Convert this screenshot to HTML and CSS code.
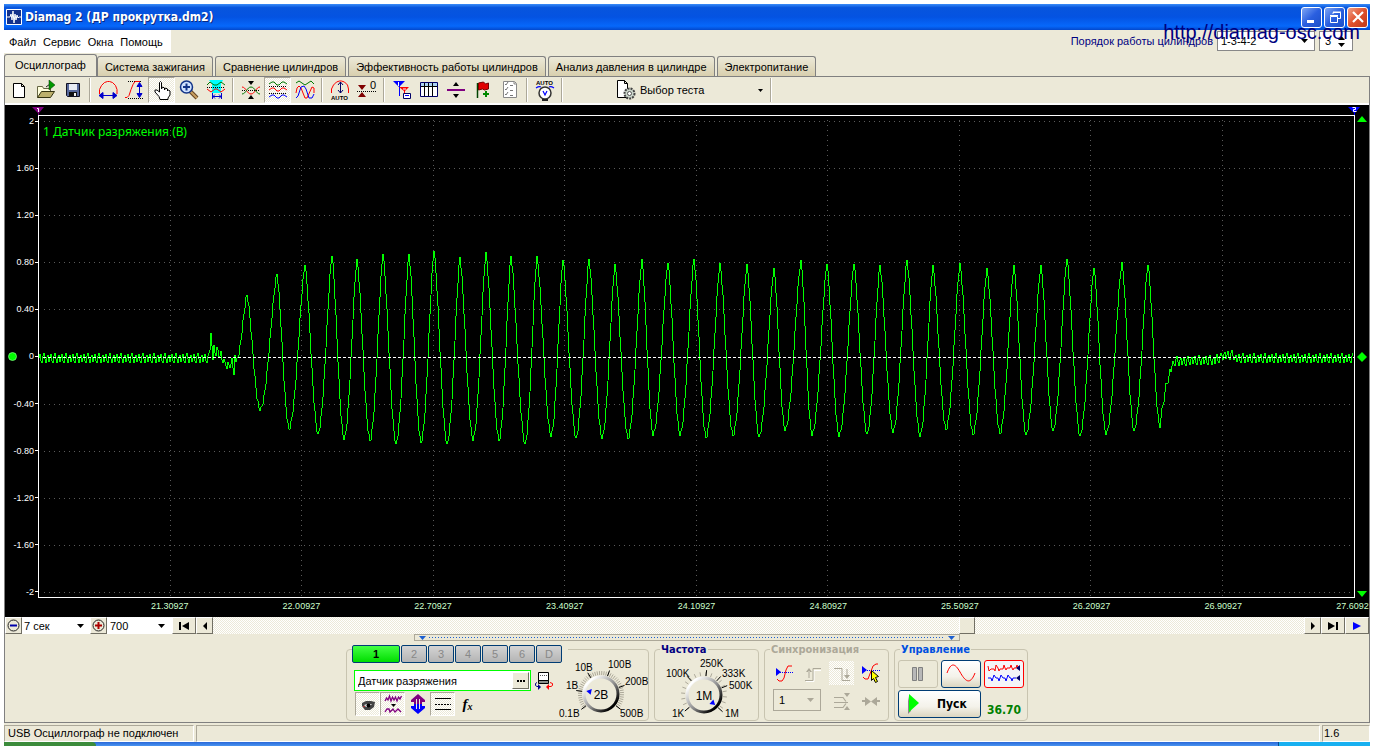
FILE: index.html
```html
<!DOCTYPE html>
<html lang="ru">
<head>
<meta charset="utf-8">
<title>Diamag 2 (ДР прокрутка.dm2)</title>
<link rel="stylesheet" href="styles.css">
</head>
<body>
<div class="window">
  <header class="titlebar">
    <svg class="app-icon" width="16" height="16" viewBox="0 0 16 16"><path fill="#14328c" stroke="#fff" d="M.5.5h15v15H.5z"/><path fill="none" stroke="#fff" d="M1 8h3l1-3 1 6 1-9 1 12 1-9 1 6 1-5 1 3 1-1h2"/></svg>
    <h1 class="title">Diamag 2 (ДР прокрутка.dm2)</h1>
    <div class="win-buttons">
      <button class="win-btn" aria-label="Свернуть"><svg width="18" height="18" viewBox="0 0 18 18"><path fill="#fff" d="M4 12h7v3H4z"/></svg></button>
      <button class="win-btn" aria-label="Восстановить"><svg width="18" height="18" viewBox="0 0 18 18"><path fill="none" stroke="#fff" d="M7 6V4.500h7.500v6H12M7 4h8M4.500 8.500h7v6h-7zM4 7.500h8"/></svg></button>
      <button class="win-btn close" aria-label="Закрыть"><svg width="18" height="18" viewBox="0 0 18 18"><path stroke="#fff" stroke-width="2.200" d="M4 4l10 10M14 4L4 14"/></svg></button>
    </div>
  </header>

  <div class="menu-row">
    <nav class="menu">
      <button>Файл</button><button>Сервис</button><button>Окна</button><button>Помощь</button>
    </nav>
    <div class="order">
      <label for="order">Порядок работы цилиндров</label>
      <select id="order" class="combo order-combo"><option>1-3-4-2</option></select>
      <div class="spinner">
        <input type="text" value="3" aria-label="Номер цилиндра">
        <div class="spin-arrows">
          <button aria-label="Больше"><svg width="7" height="4"><path d="M0 4h7L3.500 0z"/></svg></button>
          <button aria-label="Меньше"><svg width="7" height="4"><path d="M0 0h7L3.500 4z"/></svg></button>
        </div>
      </div>
    </div>
    <div class="watermark">http://diamag-osc.com</div>
  </div>

  <div class="tabs" role="tablist">
    <button class="tab active" role="tab">Осциллограф</button>
    <button class="tab" role="tab">Система зажигания</button>
    <button class="tab" role="tab">Сравнение цилиндров</button>
    <button class="tab" role="tab">Эффективность работы цилиндров</button>
    <button class="tab" role="tab">Анализ давления в цилиндре</button>
    <button class="tab" role="tab">Электропитание</button>
  </div>

  <main class="page">
    <div class="toolbar">
      <button class="tool" aria-label="Новый"><svg width="20" height="20" viewBox="0 0 20 20"><path fill="#fff" stroke="#000" d="M4.500 3.500h8l3 3v11h-11zM12.500 3.500v3h3"/></svg></button>
      <button class="tool" aria-label="Открыть"><svg width="20" height="20" viewBox="0 0 20 20"><path fill="#ffd" stroke="#664" d="M1.500 17.500v-11h5l1 2h7v3"/><path fill="#bcb06c" stroke="#331" d="M1.500 17.500l4-6h13l-4 6z"/><path fill="none" stroke="#222" d="M10 7l4-3"/><path fill="#090" stroke="#030" stroke-width=".5" d="M13 0l6 5-6 5z"/></svg></button>
      <button class="tool" aria-label="Сохранить"><svg width="20" height="20" viewBox="0 0 20 20"><path fill="#57689a" stroke="#112" d="M3.500 3.500h13v13h-12l-1-1z"/><path fill="#e8ecf4" d="M6 4h8v6H6z"/><path fill="#111" d="M6 12h8v4H6z"/><path fill="#eee" d="M11 13h2v3h-2z"/></svg></button>
      <span class="sep"></span>
      <button class="tool" aria-label="Ширина"><svg width="20" height="20" viewBox="0 0 20 20"><path fill="none" stroke="red" d="M1.500 14V9.500l2-4 3-3 3-1h2l3 1 3 3 1.500 4V14"/><path fill="#00c" stroke="#00c" d="M2 15.500h16M5 12.500v6l-4-3zM15 12.500v6l4-3z"/></svg></button>
      <button class="tool" aria-label="Высота"><svg width="20" height="20" viewBox="0 0 20 20"><path stroke="#000" stroke-dasharray="1 1" d="M3 1.500h13M3 18.500h15"/><path fill="none" stroke="red" d="M0 17.500h2l2-2 2-6 2-5 2-3h5"/><path fill="#00c" stroke="#00c" d="M14.500 3v14M12 6.500h5l-2.500-4zM12 13.500h5l-2.500 4z"/></svg></button>
      <button class="tool pressed" aria-label="Перемещение"><svg width="20" height="20" viewBox="0 0 20 20"><path fill="#fff" stroke="#000" d="M7.500 12V2.500l1-1 1 1V9l1-2 2 1v2l1-2 2 1v2l1-1 1.500 1v4l-2 3v1.500H8l-1-3-4-4.500v-2h2z"/></svg></button>
      <button class="tool" aria-label="Лупа"><svg width="20" height="20" viewBox="0 0 20 20"><path stroke="#642" stroke-width="4" d="M11 11l7 7"/><path stroke="#c9a060" stroke-width="2" d="M11 11l7 7"/><circle cx="7.500" cy="7" r="6" fill="#cfe2ff" stroke="#138" stroke-width="1.500"/><path fill="#138" d="M4 6h7v2H4zM6.500 3.500h2v7h-2z"/></svg></button>
      <button class="tool" aria-label="Масштаб участка"><svg width="20" height="20" viewBox="0 0 20 20"><path fill="#0ff" d="M3 0h14l-2 4v9H6V4z"/><path fill="none" stroke="#070" d="M1 5l3-3 4 3h3l4-3 4 3"/><path stroke="#000" stroke-dasharray="1 1" d="M1 7.500h18"/><path fill="none" stroke="red" d="M1 9l4 3 4-3h2l4 3 4-3"/><path fill="none" stroke="#00c" d="M6.500 13v6M15.500 13v6M7 16.500h8M9 14.500l-2 2 2 2M13 14.500l2 2-2 2"/></svg></button>
      <span class="sep"></span>
      <button class="tool" aria-label="Совместить"><svg width="20" height="20" viewBox="0 0 20 20"><path d="M7 1h6l-3 4zM7 19h6l-3-4z"/><path stroke="#000" stroke-dasharray="1 1" d="M1 10.500h18"/><path fill="none" stroke="red" d="M1 7c4 0 5 7 9 7s5-7 9-7"/><path fill="none" stroke="#070" d="M1 14c4 0 5-7 9-7s5 7 9 7"/></svg></button>
      <button class="tool pressed" aria-label="Разнести"><svg width="20" height="20" viewBox="0 0 20 20"><path fill="none" stroke="#070" d="M1 4l3-2h2l3 3h2l3-3h2l3 2"/><path stroke="#000" stroke-dasharray="1 1" d="M1 6.500h18M1 13.500h18"/><path fill="none" stroke="red" d="M1 10l3-2h2l3 3h2l3-3h2l3 2"/><path fill="none" stroke="#00f" d="M1 17l3-2h2l3 3h2l3-3h2l3 2"/></svg></button>
      <button class="tool" aria-label="Наложить"><svg width="20" height="20" viewBox="0 0 20 20"><path fill="none" stroke="#070" d="M1 3l3-2 6 4 6-4 3 3"/><path fill="none" stroke="red" d="M1 13l1-5 2-2 2 2 4 10h2l5-11 2 1v5"/><path fill="none" stroke="#00f" d="M1 18l2-2 3-9 3-1 2 3 3 9h3l2-4"/></svg></button>
      <span class="sep"></span>
      <button class="tool" aria-label="Автомасштаб"><svg width="20" height="20" viewBox="0 0 20 20"><path fill="none" stroke="red" d="M1.500 13V9l2-4 3-3 3-1h2l3 1 3 3 1 4v4"/><path fill="none" stroke="#006" d="M10.500 2v11M8 5l2.500-3L13 5M8 10l2.500 3 2.500-3"/><text class="ico-text" x="1" y="20">AUTO</text></svg></button>
      <button class="tool" aria-label="Обнулить"><svg width="20" height="20" viewBox="0 0 20 20"><path fill="#800000" d="M1 5h8L5 10zM1 17h8l-4-5z"/><path stroke="#000" stroke-dasharray="1 1" d="M0 11.500h20"/><text class="ico-zero" x="13" y="9">0</text></svg></button>
      <span class="sep"></span>
      <button class="tool" aria-label="Маркеры"><svg width="20" height="20" viewBox="0 0 20 20"><path fill="#00f" d="M1 1h12L8 6v10H7V7z"/><path fill="red" d="M7 7h10l-4 4v5h-1v-5z"/><path stroke="#fff" d="M6.500 2v4M11 9h3"/><path fill="#fff" stroke="#006" d="M11.500 13.500h7v5h-7z"/><path stroke="#00f" d="M13 15.500h4"/></svg></button>
      <button class="tool" aria-label="Таблица"><svg width="20" height="20" viewBox="0 0 20 20"><path fill="#fff" stroke="#006" d="M1.500 2.500h17v14h-17z"/><path fill="#acd4f4" d="M2 3h16v3H2z"/><path fill="none" stroke="#000" d="M2 6.500h16M5.500 3v13M9.500 3v13M13.500 3v13"/></svg></button>
      <button class="tool" aria-label="Линия"><svg width="20" height="20" viewBox="0 0 20 20"><path d="M7 6h6l-3-4zM7 14h6l-3 4z"/><path fill="#800080" d="M1 9h18v2H1z"/></svg></button>
      <button class="tool" aria-label="Добавить флаг"><svg width="20" height="20" viewBox="0 0 20 20"><path stroke="#040" stroke-width="1.500" d="M4.500 3v15"/><path fill="#e00000" stroke="#700" d="M5.500 3l5-1 2 2 3-1v6l-4 1-2-1-4 1z"/><path fill="#080" d="M12 11h2v2h2v2h-2v2h-2v-2h-2v-2h2z"/></svg></button>
      <button class="tool" aria-label="Список"><svg width="20" height="20" viewBox="0 0 20 20"><path fill="#fff" stroke="#888" d="M3.500 1.500h11l2 2v14h-13zM14 2v2h2"/><path fill="none" stroke="#777" d="M5 4l1 1 2-3M5 9l1 1 2-3M5 14l1 1 2-3M10 5.500h3M10 10.500h3M10 15.500h3"/></svg></button>
      <span class="sep"></span>
      <button class="tool" aria-label="Автоизмерение"><svg width="20" height="22" viewBox="0 0 20 22"><text class="ico-text" x="1" y="6">AUTO</text><circle cx="10" cy="14" r="6" fill="#fff" stroke="#333" stroke-width="1.500"/><path fill="none" stroke="#00f" stroke-width="1.200" d="M8 12l2 4 2-4M1 9q3-2 5-1M19 9q-3-2-5-1"/><path fill="#222" d="M7 20h6v2H7z"/></svg></button>
      <span class="sep"></span>
      <button class="test-menu">
        <svg width="20" height="20" viewBox="0 0 20 20"><path fill="#fff" stroke="#000" d="M1.500.500h7l3 3v14h-10zM8.500.500v3h3"/><circle cx="13.500" cy="13.500" r="5" fill="#cdd8cd" stroke="#444" stroke-width="2" stroke-dasharray="2 1"/><circle cx="13.500" cy="13.500" r="2" fill="#fff" stroke="#555"/></svg>
        <span>Выбор теста</span>
        <svg class="caret" width="5" height="3"><path d="M0 0h5L2.500 3z"/></svg>
      </button>
      <span class="sep"></span>
    </div>

    <section class="chart">
      <div class="marker-row">
        <svg width="12" height="9" viewBox="0 0 12 9"><path fill="#800080" d="M0 0h12L7 6v3H6V6z"/><path fill="none" stroke="#fff" d="M5 1.500h1.500V5"/></svg>
        <svg width="12" height="9" viewBox="0 0 12 9"><path fill="#00f" d="M0 0h12L7 6v3H6V6z"/><path fill="none" stroke="#fff" d="M4.500.500h3v2h-2v2h3"/></svg>
      </div>
      <div class="y-axis">
        <span>2</span><span>1.60</span><span>1.20</span><span>0.80</span><span>0.40</span><span>0</span><span>-0.40</span><span>-0.80</span><span>-1.20</span><span>-1.60</span><span>-2</span>
        <svg class="zero-dot" width="9" height="9"><circle cx="4.500" cy="4.500" r="4" fill="#0f0" stroke="#8f8" stroke-width=".7"/></svg>
      </div>
      <div class="plot">
        <svg id="plot" class="plot-area" viewBox="39 116 1315 481" preserveAspectRatio="none"></svg>
        <div class="plot-title">1 Датчик разряжения (В)</div>
      </div>
      <div class="handles">
        <svg width="10" height="8"><path fill="#0f0" d="M0 7h10L5 1z"/></svg>
        <svg width="10" height="10"><path fill="#0f0" d="M5 0l5 5-5 5-5-5z"/></svg>
        <svg width="10" height="8"><path fill="#0f0" d="M0 1h10L5 7z"/></svg>
      </div>
      <div class="x-axis">
        <span>21.30927</span><span>22.00927</span><span>22.70927</span><span>23.40927</span><span>24.10927</span><span>24.80927</span><span>25.50927</span><span>26.20927</span><span>26.90927</span><span>27.60927</span>
      </div>
    </section>

    <div class="scroll-row">
      <button class="sbtn w17" aria-label="Сжать"><svg width="13" height="13"><circle cx="6.500" cy="6.500" r="5.500" fill="none" stroke="#222"/><path fill="#00a" d="M3 5.500h7v2H3z"/></svg></button>
      <select class="combo time-combo" aria-label="Время"><option>7 сек</option></select>
      <button class="sbtn w17" aria-label="Растянуть"><svg width="13" height="13"><circle cx="6.500" cy="6.500" r="5.500" fill="none" stroke="#222"/><path fill="#a00" d="M3 5.500h7v2H3zM5.500 3h2v7h-2z"/></svg></button>
      <select class="combo scale-combo" aria-label="Масштаб"><option>700</option></select>
      <button class="sbtn w24" aria-label="В начало"><svg width="10" height="8"><path d="M0 0h2v8H0zM10 0v8L3 4z"/></svg></button>
      <button class="sbtn w17" aria-label="Назад"><svg width="4" height="8"><path d="M4 0v8L0 4z"/></svg></button>
      <input class="scrollbar" type="range" min="0" max="1000" value="694" aria-label="Прокрутка">
      <button class="sbtn w17" aria-label="Вперёд"><svg width="4" height="8"><path d="M0 0v8l4-4z"/></svg></button>
      <button class="sbtn w24" aria-label="В конец"><svg width="10" height="8"><path d="M8 0h2v8H8zM0 0v8l7-4z"/></svg></button>
      <button class="sbtn w24" aria-label="Воспроизвести"><svg width="8" height="8"><path fill="#00f" d="M0 0v8l8-4z"/></svg></button>
    </div>

    <section class="bottom">
      <div class="splitter">
        <svg width="7" height="4"><path fill="#1c5fd0" d="M0 0h7L3.500 4z"/></svg><span class="dots"></span><svg width="7" height="4"><path fill="#1c5fd0" d="M0 0h7L3.500 4z"/></svg>
      </div>
      <div class="groups">
        <div class="group channels">
          <div class="ch-left">
            <div class="ch-tabs"><button class="ch on">1</button><button class="ch">2</button><button class="ch">3</button><button class="ch">4</button><button class="ch">5</button><button class="ch">6</button><button class="ch">D</button></div>
            <div class="ch-name">
              <div class="name-box"><input type="text" value="Датчик разряжения" aria-label="Имя канала"><button class="more" aria-label="Выбрать"><svg width="8" height="2"><path d="M0 0h2v2H0zM3 0h2v2H3zM6 0h2v2H6z"/></svg></button></div>
              <button class="plain" aria-label="Подключить датчик"><svg width="20" height="20" viewBox="0 0 20 20"><path fill="#fff" stroke="#000" d="M4.500 1.500h10v8h-10z"/><path fill="#8a8f8a" stroke="#000" d="M4.500 9.500h10v3h-10z"/><path stroke="#555" stroke-dasharray="1 1" d="M6 4.500h7"/><path fill="none" stroke="#008" d="M3 11.500l-1.500 1v2l1.500 1h2"/><path fill="#008" d="M4 13v6l3-3z"/><path fill="none" stroke="red" d="M16 11.500l2.500 1v2l-1.500 1h-2"/><path fill="red" d="M15 13v6l-3-3z"/></svg></button>
            </div>
            <div class="ch-tools">
              <button class="mini pressed" aria-label="Видимость"><svg width="20" height="20" viewBox="0 0 20 20"><path fill="#444" d="M4 9l4-2h5l4 1-1 5-4 3H7l-3-4z"/><path fill="#ddd" d="M6 11l3-1h5l-3 3H8z"/><circle cx="10.500" cy="11.500" r="2"/><path fill="#a33" d="M5 12h2v1H5z"/></svg></button>
              <button class="mini pressed" aria-label="Фильтр"><svg width="20" height="20" viewBox="0 0 20 20"><path fill="none" stroke="#800080" stroke-width="1.300" d="M2 7l1.500-3L5 6l1.500-4L8 7l1.500-4L11 6l1.500-3L14 7l1.500-4L17 5l1.500-3M2 18l2-3h2l1 3 1-1 2-2 2 3 3-3 3 3"/><path d="M8 10h5l-2.500 3z"/></svg></button>
              <button class="mini" aria-label="Инверсия"><svg width="20" height="20" viewBox="0 0 20 20"><path fill="#800080" d="M10 0l7 6v2h-3v2h-2V5h-1v5H9V5H8v5H6V8H3V6z"/><path fill="#00f" d="M10 20l7-6v-2h-3v-2h-2v5h-1v-5H9v5H8v-5H6v2H3v2z"/></svg></button>
              <button class="mini pressed" aria-label="Уровни"><svg width="20" height="20" viewBox="0 0 20 20"><path stroke="#000" d="M2 4.500h16M2 15.500h16"/><path stroke="#000" stroke-dasharray="2 1" d="M2 10.500h16"/></svg></button>
              <button class="mini fx" aria-label="Функция">f<small>x</small></button>
            </div>
          </div>
          <svg class="dial" id="volt-dial" width="94" height="66" viewBox="0 0 94 66" data-label="2В"></svg>
        </div>

        <div class="group freq">
          <h2 class="legend navy">Частота</h2>
          <svg class="dial" id="freq-dial" width="94" height="66" viewBox="0 0 94 66" data-label="1М"></svg>
        </div>

        <div class="group sync">
          <h2 class="legend dim">Синхронизация</h2>
          <div class="sync-grid">
            <button class="mini" aria-label="По уровню"><svg width="20" height="20" viewBox="0 0 20 20"><path fill="#00f" d="M2 5v8l5-4z"/><path stroke="#00f" stroke-dasharray="1 1" d="M6 9.500h13"/><path fill="none" stroke="red" d="M3 16l2 2h3l2-3 2-8 2-4h4"/></svg></button>
            <button class="mini" aria-label="По фронту"><svg width="20" height="20" viewBox="0 0 20 20"><path fill="none" stroke="#fff" d="M3 18.500h8v-11h7"/><path fill="none" stroke="#aca899" d="M2 17.500h8V5.500h8"/><path fill="#aca899" d="M3 9h6L6 5zM5.500 8h1v7h-1z"/></svg></button>
            <button class="mini shaded" aria-label="По спаду"><svg width="20" height="20" viewBox="0 0 20 20"><path fill="none" stroke="#aca899" d="M2 5.500h8v12h8"/><path fill="#aca899" d="M12 12h6l-3 4zM14.500 6h1v8h-1z"/></svg></button>
            <button class="mini" aria-label="Вручную"><svg width="20" height="20" viewBox="0 0 20 20"><path fill="#00f" d="M1 3v8l5-4z"/><path stroke="#00f" stroke-dasharray="1 1" d="M6 7.500h13"/><path fill="none" stroke="red" d="M2 14l2 2h3l5-13 3-2h2"/><path fill="#ff0" stroke="#000" d="M10.500 7.500l7 6-3 1 2 4-2 1-2-4-2 2z"/></svg></button>
            <select class="combo sync-combo" aria-label="Канал синхронизации" disabled><option>1</option></select>
            <button class="mini" aria-label="Уровень" disabled><svg width="20" height="20" viewBox="0 0 20 20"><path fill="none" stroke="#aca899" d="M2 6.500h9l3 4M2 16.500h9l3-4M2 11.500h14" stroke-width="1.200"/><path fill="#aca899" d="M12 2h6l-3 4zM12 19h6l-3-4z"/></svg></button>
            <button class="mini" aria-label="Центр" disabled><svg width="20" height="20" viewBox="0 0 20 20"><path fill="#aca899" d="M1 9h3V6l6 4.500L4 15v-4H1zM19 9h-3V6l-6 4.500 6 4.500v-4h3z"/></svg></button>
          </div>
        </div>

        <div class="group control">
          <h2 class="legend blue">Управление</h2>
          <div class="ctl-grid">
            <button class="xp off" aria-label="Пауза" disabled><svg width="14" height="16"><path fill="#b8b8b8" stroke="#808080" d="M1.500 1.500h4v13h-4zM7.500 1.500h4v13h-4z"/></svg></button>
            <button class="xp" aria-label="Синусоида"><svg width="30" height="22" viewBox="0 0 30 22"><path fill="none" stroke="red" d="M1 10C5-1 9 0 14 9s10 14 15 1"/></svg></button>
            <button class="xp red" aria-label="Самописец"><svg width="34" height="22" viewBox="0 0 34 22"><path fill="none" stroke="red" d="M1 3l1 5 2-2h3l1 2 1-6 2 3 1 3 1-2h3l1-4 1 3 1 2 1-2h3l1-3 1 3 1 2 1-2h2l1-3 1 2"/><path fill="none" stroke="#00f" d="M1 15h3l1 3 1-3 1-3 2 3h2l1 3 1-3 1-3 2 3h2l1 3 1-3 1-3 2 3h1l1 3 1-3h3"/><path fill="#006" d="M33 2v6l-4-3zM33 12v6l-4-3z"/></svg></button>
            <button class="xp start"><svg width="11" height="20"><path fill="#888" d="M0 2v18l3-3z"/><path fill="#0f0" d="M1 0v18l10-9z"/></svg><span>Пуск</span></button>
            <output class="rate">36.70</output>
          </div>
        </div>
      </div>
    </section>
  </main>

  <footer class="status">
    <div class="cell first">USB Осциллограф не подключен</div>
    <div class="cell grow"></div>
    <div class="cell last">1.6</div>
  </footer>
  <div class="taskbar"><span class="start-edge"></span><span class="tray-edge"></span></div>
</div>
<script src="chart.js"></script>
</body>
</html>
```
FILE: styles.css
```css
* { box-sizing: border-box; }
html, body { height: 100%; margin: 0; }
body { background: #fff; font-family: "Liberation Sans", Arial, sans-serif; font-size: 11px; color: #000; }
button, input, select { font: inherit; color: inherit; margin: 0; padding: 0; border: 0; background: none; border-radius: 0; }
svg { display: block; flex: none; }
h1, h2 { margin: 0; }

.window { display: flex; flex-direction: column; height: 100vh; padding: 4px 4px 0; overflow: hidden; }

.titlebar { display: flex; align-items: center; height: 26px; padding: 0 2px; background: linear-gradient(#3a8cf8 0, #0855dd 14%, #0453e2 50%, #0668fb 85%, #0348cc 100%); }
.app-icon { margin-right: 3px; }
.title { flex: 1; font: bold 12px/18px "DejaVu Sans Condensed", "DejaVu Sans", sans-serif; color: #fff; text-shadow: 1px 1px #0a2a80; }
.win-buttons { display: flex; gap: 2px; }
.win-btn { display: grid; place-items: center; width: 21px; height: 21px; border: 1px solid #fff; border-radius: 3px; background: linear-gradient(135deg, #7fa6f4, #2a5fe0 50%, #1c4fc8); }
.win-btn.close { background: linear-gradient(135deg, #f0a088, #e0502c 50%, #c0391a); }

.menu-row { position: relative; display: flex; justify-content: space-between; align-items: flex-start; height: 24px; background: #ece9d8; }
.menu { display: flex; gap: 7px; height: 23px; padding: 0 8px 0 5px; background: #fff; }
.order { display: flex; align-items: center; gap: 4px; padding-right: 17px; height: 22px; color: #000080; }
.combo { appearance: none; color: #000; background: #fff url("data:image/svg+xml,%3Csvg xmlns='http://www.w3.org/2000/svg' width='7' height='4'%3E%3Cpath d='M0 0h7L3.500 4z'/%3E%3C/svg%3E") no-repeat right 6px center; }
.order-combo { width: 98px; height: 20px; padding-left: 3px; border: 1px solid #888; }
.spinner { display: flex; align-items: center; width: 34px; height: 20px; border: 1px solid #888; background: #fff; color: #000; }
.spinner input { width: 18px; padding-left: 5px; }
.spin-arrows { display: flex; flex-direction: column; gap: 3px; }
.spin-arrows button { height: 4px; }
.watermark { position: absolute; right: 10px; top: -10px; font: 20px/24px "Liberation Sans", sans-serif; color: #000080; }

.tabs { display: flex; align-items: flex-end; gap: 2px; height: 22px; background: #ece9d8; }
.tab { height: 20px; padding: 0 7px; border: 1px solid #808080; border-bottom: 0; border-radius: 3px 3px 0 0; background: linear-gradient(#ece9d8, #d8cfae); white-space: nowrap; }
.tab.active { height: 22px; margin-right: -2px; padding: 0 10px 2px; background: #ece9d8; }

.page { flex: 1; display: flex; flex-direction: column; min-height: 0; background: #ece9d8; border: 1px solid #808080; }
.toolbar { display: flex; align-items: center; height: 28px; border-bottom: 2px solid #fff; }
.tool { display: grid; place-items: center; width: 27px; height: 26px; }
.pressed, .shaded { background: repeating-conic-gradient(#fff 0 25%, #ece9d8 0 50%) 0 0 / 2px 2px; }
.pressed { border: 1px solid; border-color: #aca899 #fff #fff #aca899; }
.sep { width: 2px; height: 24px; margin: 0 3px; border-left: 1px solid #aca899; border-right: 1px solid #fff; }
.ico-text { font: bold 6px "Liberation Sans", sans-serif; }
.ico-zero { font: 11px "Liberation Sans", sans-serif; }
.test-menu { display: flex; align-items: center; gap: 4px; width: 201px; padding: 0 4px 0 50px; }
.caret { margin-left: auto; }

.chart { flex: 1; min-height: 0; display: grid; grid-template-columns: 33px minmax(0, 1fr) 14px; grid-template-rows: 10px minmax(0, 1fr) 19px; background: #000; overflow: hidden; }
.marker-row { grid-column: 2; display: flex; justify-content: space-between; margin: 0 -5px 0 -6px; padding-top: 2px; }
.y-axis { grid-column: 1; position: relative; display: flex; flex-direction: column; justify-content: space-between; font: 9px/12px "Liberation Sans", sans-serif; color: #fff; text-align: right; }
.y-axis span { display: flex; align-items: center; justify-content: flex-end; gap: 1px; }
.y-axis span::after { content: ""; width: 3px; height: 1px; background: #fff; }
.zero-dot { position: absolute; left: 3px; top: calc(50% - 5px); }
.plot { position: relative; border: 1px solid #fff; }
.plot-area { width: 100%; height: 100%; }
.plot-area * { vector-effect: non-scaling-stroke; shape-rendering: crispEdges; }
.grid-line { stroke: #5a5a5a; stroke-dasharray: 1 4; }
.zero-line { stroke: #fff; stroke-dasharray: 3 2; }
.wave { fill: none; stroke: #0f0; }
.plot-title { position: absolute; left: 4px; top: 8px; font: 12px/16px "Noto Sans", sans-serif; color: #0f0; }
.handles { display: flex; flex-direction: column; justify-content: space-between; align-items: center; }
.x-axis { grid-column: 2; display: grid; grid-template-columns: repeat(10, minmax(0, 1fr)); margin: 0 -5% 0 5%; font: 9px/17px "Liberation Sans", sans-serif; color: #cfc; text-align: center; }

.scroll-row { display: flex; height: 17px; background: #fff; }
.sbtn { display: grid; place-items: center; flex: none; background: #ece9d8; border: 1px solid; border-color: #fff #716f64 #716f64 #fff; }
.w17 { width: 17px; }
.w24 { width: 24px; }
.time-combo { width: 68px; padding-left: 2px; }
.scale-combo { width: 65px; padding-left: 3px; background-position: right 7px center; }
.scrollbar { appearance: none; flex: 1; min-width: 0; background: repeating-conic-gradient(#fff 0 25%, #ece9d8 0 50%) 0 0 / 2px 2px; }
.scrollbar::-webkit-slider-thumb { appearance: none; width: 16px; height: 17px; background: #ece9d8; border: 1px solid; border-color: #fff #716f64 #716f64 #fff; }

.bottom { display: flex; flex-direction: column; align-items: center; height: 88px; }
.splitter { display: flex; align-items: center; gap: 3px; width: 40%; height: 7px; padding: 0 4px; border: 1px solid #aca899; }
.dots { flex: 1; height: 1px; background: repeating-linear-gradient(90deg, #1c5fd0 0 1px, transparent 1px 3px); }
.groups { display: flex; gap: 5px; padding-top: 8px; }
.group { height: 72px; border: 1px solid #c8c4b0; border-radius: 4px; }
.legend { width: max-content; margin: -8px 0 0 5px; padding: 0 1px; background: #ece9d8; font: bold 11px/16px "DejaVu Sans Condensed", "DejaVu Sans", sans-serif; }
.navy { color: #000080; }
.dim { color: #aca899; }
.blue { color: #0050e0; }

.channels { display: flex; width: 303px; padding-left: 5px; }
.ch-left { width: 210px; margin-top: -5px; }
.ch-tabs { display: flex; gap: 1px; width: max-content; background: #ece9d8; padding-right: 6px; }
.ch { width: 26px; height: 18px; border: 1px solid #003c74; border-radius: 2px; background: linear-gradient(#d4d4d4, #b4b4b4); color: #888; }
.ch.on { width: 48px; background: linear-gradient(#4f4, #0d0); color: #000; font-weight: bold; }
.ch-name { display: flex; align-items: center; gap: 3px; padding: 7px 0 0 2px; }
.name-box { display: flex; width: 177px; height: 21px; padding: 1px; border: 1px solid #0f0; background: #fff; }
.name-box input { flex: 1; min-width: 0; padding-left: 2px; }
.more { display: grid; place-items: center; width: 17px; background: #ece9d8; border: 1px solid; border-color: #fff #716f64 #716f64 #fff; }
.ch-tools { display: flex; gap: 0; padding: 1px 0 0 3px; }
.mini { display: grid; place-items: center; width: 25px; height: 24px; }
.fx { display: flex; align-items: center; justify-content: center; font: italic bold 15px/24px "Liberation Serif", serif; }
.fx small { font-size: 10px; padding-top: 5px; }
.dial { margin-top: 2px; overflow: visible; }
.dial text { font: 10px "Liberation Sans", sans-serif; }
.dial .value { font-size: 12px; text-anchor: middle; }

.freq { width: 105px; }
.freq .dial { margin: -1px 0 0 5px; }
.sync { width: 125px; }
.sync-grid { display: grid; grid-template-columns: repeat(4, 28px); gap: 4px 1px; padding: 3px 0 0 6px; }
.sync-combo { grid-column: 1 / 3; width: 48px; height: 22px; margin-left: 2px; padding-left: 5px; opacity: 1; border: 1px solid #aca899; background-color: #ece9d8; background-image: url("data:image/svg+xml,%3Csvg xmlns='http://www.w3.org/2000/svg' width='7' height='4'%3E%3Cpath fill='%23aca899' d='M0 0h7L3.500 4z'/%3E%3C/svg%3E"); }
.control { width: 134px; }
.ctl-grid { display: grid; grid-template-columns: repeat(3, 40px); grid-template-rows: 28px 28px; gap: 2px 3px; padding: 2px 0 0 3px; }
.xp { display: grid; place-items: center; border: 1px solid #003c74; border-radius: 3px; background: linear-gradient(#fff, #f4f2ea 60%, #dcd6c0); }
.xp.off { background: #ece9d8; border-color: #c8c4b0; }
.xp.red { border-color: red; background: #f4f4f8; }
.xp.start { grid-column: 1 / 3; display: flex; align-items: center; gap: 18px; padding-left: 9px; font: bold 12px/16px "DejaVu Sans Condensed", "DejaVu Sans", sans-serif; }
.rate { align-self: end; text-align: center; font: bold 12px/16px "DejaVu Sans Condensed", "DejaVu Sans", sans-serif; color: #008000; }

.status { display: flex; gap: 2px; height: 19px; padding-top: 2px; background: #ece9d8; }
.cell { height: 17px; padding: 0 3px; line-height: 15px; border: 1px solid; border-color: #aca899 #fff #fff #aca899; white-space: nowrap; }
.first { width: 190px; }
.grow { flex: 1; }
.last { width: 48px; padding: 0 1px; }
.taskbar { display: flex; justify-content: space-between; height: 4px; background: linear-gradient(#2a68d8, #4a94f0); }
.start-edge { width: 92px; background: #3c8c3c; border-radius: 0 4px 0 0; }
.tray-edge { width: 92px; background: #18b0f0; border-left: 1px solid #0a4a90; }
```
FILE: chart.js
```js
const NS = "http://www.w3.org/2000/svg";

function add(parent, name, attrs, text) {
  const el = document.createElementNS(NS, name);
  for (const key in attrs) el.setAttribute(key, attrs[key]);
  if (text) el.textContent = text;
  parent.appendChild(el);
  return el;
}

/* Extremes of the cranking pulses: x, y of each peak and trough in turn */
const pulses = [
  [236,362],[247,295],[260,411],[277,274],[289,429],[305,265],[318,434],[332,256],[344,440],[357,259],[370,441],
  [383,254],[396,444],[409,254],[421,443],[434,251],[447,444],[460,257],[473,441],[486,252],[499,441],
  [511,256],[525,444],[537,256],[551,437],[563,260],[576,438],[589,259],[602,439],[615,264],[628,439],
  [642,259],[653,436],[668,263],[680,436],[694,259],[706,438],[720,263],[733,436],[747,264],[759,437],
  [774,268],[785,431],[801,260],[812,436],[827,264],[839,437],[854,264],[867,434],[880,265],[893,433],
  [907,260],[920,437],[933,265],[946,430],[960,263],[973,435],[987,268],[1000,434],[1014,265],[1026,435],
  [1041,265],[1053,431],[1067,259],[1080,436],[1094,268],[1106,435],[1122,262],[1134,431],[1148,265],[1160,428]
];
const ripple = [-5, 1, 5, -1, -3, 4, 0, -4, 3, 5, -2];

function wavePoints() {
  const pts = [];
  const noise = (x, mid) => pts.push([x, mid + ripple[x % 11]]);
  for (let x = 39; x < 210; x++) noise(x, 358);
  pts.push([210,350],[211,333],[212,346],[213,360],[214,345],[215,353],[216,356],[217,347],[218,350],[219,358],
    [220,356],[221,351],[222,360],[223,363],[224,359],[225,362],[226,366],[227,369],[228,362],[229,365],[230,368],
    [231,364],[232,358],[233,368],[234,375],[235,355]);
  for (let i = 0; i < pulses.length - 1; i++) {
    const [x0, y0] = pulses[i], [x1, y1] = pulses[i + 1];
    for (let x = x0; x < x1; x++) {
      const t = (x - x0) / (x1 - x0);
      const u = y1 < y0 ? Math.pow(t, 1.25) : 1 - Math.pow(1 - t, 1.15);
      const f = 0.6 * (0.5 - 0.5 * Math.cos(Math.PI * u)) + 0.4 * u;
      const jitter = x === x0 ? 0 : (x % 3 - 1) * 2;
      pts.push([x, Math.round(y0 + (y1 - y0) * f + jitter)]);
    }
  }
  pts.push([1160,428],[1162,408],[1164,402],[1166,383],[1168,383],[1170,369],[1171,372],[1173,361],[1174,364]);
  for (let x = 1175; x < 1354; x++) {
    noise(x, x < 1190 ? 361 : x < 1216 ? 360 : x < 1222 ? 358 : x < 1235 ? 355 : 358);
  }
  return pts.map(p => p.join(",")).join(" ");
}

const plot = document.getElementById("plot");
for (let i = 0; i <= 10; i++) {
  const y = Math.floor(121.5 + i * 47.1) + 0.5;
  if (i !== 5) add(plot, "line", { class: "grid-line", x1: 44, x2: 1354, y1: y, y2: y });
}
for (let i = 1; i < 10; i++) {
  const x = Math.floor(38.5 + i * 131.55) + 0.5;
  add(plot, "line", { class: "grid-line", x1: x, x2: x, y1: 120, y2: 597 });
}
add(plot, "polyline", { class: "wave", points: wavePoints() });
add(plot, "line", { class: "zero-line", x1: 43, x2: 1354, y1: 357.5, y2: 357.5 });

/* Rotary knobs: scale ticks, metal rim, pointer and captions */
function drawDial(id, cx, cy, pointer, marks) {
  const svg = document.getElementById(id);
  const grad = add(add(svg, "defs", {}), "linearGradient", { id: id + "-rim", x1: 0, y1: 0, x2: 1, y2: 1 });
  add(grad, "stop", { offset: 0.15, "stop-color": "#fff" });
  add(grad, "stop", { offset: 0.55, "stop-color": "#888" });
  add(grad, "stop", { offset: 0.85, "stop-color": "#000" });
  const ray = (deg, r0, r1, color, width) => {
    const a = deg * Math.PI / 180;
    add(svg, "line", { x1: cx + r0 * Math.cos(a), y1: cy + r0 * Math.sin(a),
      x2: cx + r1 * Math.cos(a), y2: cy + r1 * Math.sin(a), stroke: color, "stroke-width": width });
  };
  const step = id === "volt-dial" ? 6 : 15;
  for (let d = 140; d <= 400; d += step) ray(d, 19, 23, "#aca899", 1);
  for (const m of marks) {
    ray(m.deg, 19, 25, "#000", 1);
    add(svg, "text", { x: m.x, y: m.y }, m.text);
  }
  add(svg, "circle", { cx, cy, r: 17, fill: "#ece9d8", stroke: `url(#${id}-rim)`, "stroke-width": 3 });
  const p = add(svg, "path", { d: "M15 0L10-3V3z", fill: "#00f" });
  p.setAttribute("transform", `translate(${cx} ${cy}) rotate(${pointer})`);
  add(svg, "text", { class: "value", x: cx, y: cy + 5 }, svg.dataset.label);
}
drawDial("volt-dial", 39, 42, 192, [
  { text: "0.1В", x: -3, y: 65, deg: 142 }, { text: "1В", x: 4, y: 37, deg: 188 }, { text: "10В", x: 13, y: 19, deg: 238 },
  { text: "100В", x: 46, y: 16, deg: 290 }, { text: "200В", x: 63, y: 33, deg: 340 }, { text: "500В", x: 58, y: 65, deg: 38 }
]);
drawDial("freq-dial", 44, 38, 42, [
  { text: "1K", x: 12, y: 60, deg: 140 }, { text: "100K", x: 6, y: 20, deg: 228 }, { text: "250K", x: 40, y: 10, deg: 276 },
  { text: "333K", x: 62, y: 20, deg: 312 }, { text: "500K", x: 69, y: 32, deg: 338 }, { text: "1М", x: 65, y: 60, deg: 42 }
]);
```
